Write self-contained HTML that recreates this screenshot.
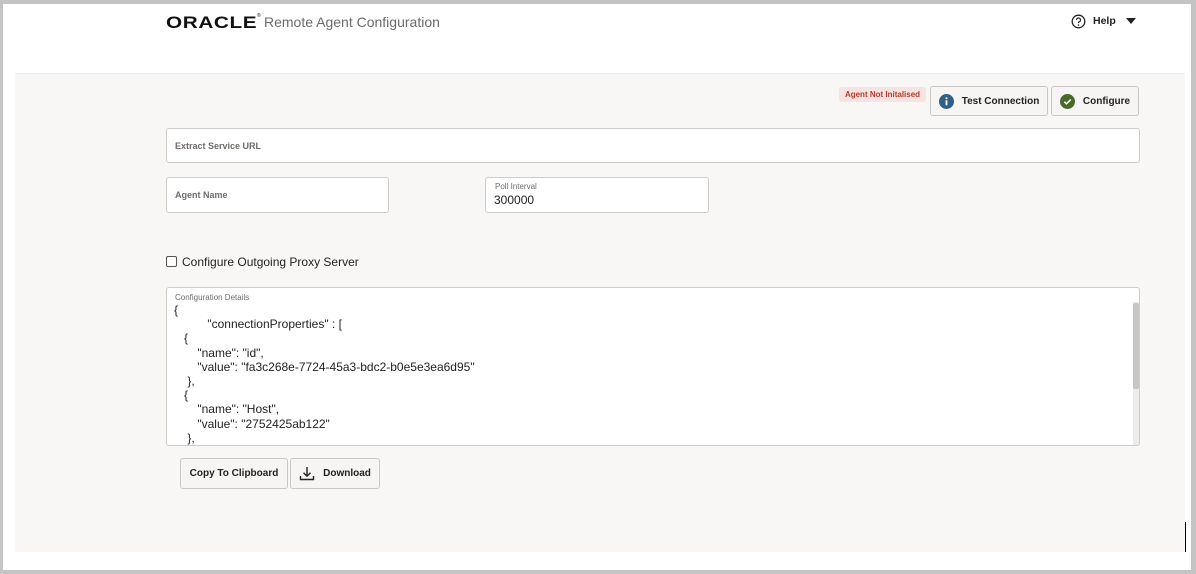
<!DOCTYPE html>
<html><head><style>
*{box-sizing:border-box;margin:0;padding:0}
body{width:1196px;height:574px;background:#c4c4c4;position:relative;font-family:"Liberation Sans",sans-serif;overflow:hidden}
.a{position:absolute}
.inner{left:3px;top:4px;width:1188px;height:566px;background:#fff}
.main{left:15px;top:73px;width:1170px;height:479px;background:#f8f7f5;border-top:1px solid #eeedeb}
.box{background:#fff;border:1px solid #cfcdca;border-radius:3px}
.lbl{font-size:9px;color:#6f6c69;font-weight:bold}
.btn{background:#f6f5f3;border:1px solid #c9c7c4;border-radius:3px;font-size:10px;font-weight:bold;color:#222;display:flex;align-items:center;justify-content:center}
.code{font-size:12px;color:#222;line-height:14.2px;white-space:pre}
</style></head><body>
<div class="a inner"></div>
<div class="a" style="left:166px;top:13px;font-size:17px;font-weight:bold;letter-spacing:0.5px;color:#111;transform:scaleX(1.22);transform-origin:left">ORACLE</div>
<div class="a" style="left:257px;top:13px;font-size:5px;color:#111">®</div>
<div class="a" style="left:264px;top:14px;font-size:14px;color:#6b6b6b">Remote Agent Configuration</div>
<svg class="a" style="left:1071px;top:14px" width="15" height="15" viewBox="0 0 15 15"><circle cx="7.5" cy="7.5" r="6.3" fill="none" stroke="#222" stroke-width="1.3"/><path d="M5.5 6a2 2 0 1 1 2.5 1.9c-.5.2-.5.6-.5 1.2" fill="none" stroke="#222" stroke-width="1.2"/><circle cx="7.5" cy="11" r=".8" fill="#222"/></svg>
<div class="a" style="left:1093px;top:15px;font-size:10.5px;font-weight:bold;color:#222">Help</div>
<svg class="a" style="left:1126px;top:18px" width="10" height="6"><path d="M0 0h10L5 6z" fill="#222"/></svg>
<div class="a main"></div>
<div class="a" style="left:839px;top:87px;width:87px;height:15px;background:#f7e3e0;border-radius:3px;color:#b23b2e;font-size:8px;font-weight:bold;text-align:center;line-height:15px">Agent Not Initalised</div>
<div class="a btn" style="left:930px;top:86px;width:118px;height:30px"><svg width="15" height="15" style="margin-right:8px"><circle cx="7.5" cy="7.5" r="7.5" fill="#2f6089"/><rect x="6.6" y="6.3" width="1.8" height="5" fill="#fff"/><circle cx="7.5" cy="4.3" r="1" fill="#fff"/></svg>Test Connection</div>
<div class="a btn" style="left:1051px;top:86px;width:88px;height:30px"><svg width="15" height="15" style="margin-right:8px"><circle cx="7.5" cy="7.5" r="7.5" fill="#4a6a2a"/><path d="M4.3 7.7l2.2 2.1 4.2-4.3" fill="none" stroke="#fff" stroke-width="1.6"/></svg>Configure</div>
<div class="a box" style="left:166px;top:128px;width:974px;height:35px"><span class="a lbl" style="left:8px;top:12px">Extract Service URL</span></div>
<div class="a box" style="left:166px;top:177px;width:223px;height:36px"><span class="a lbl" style="left:8px;top:12px">Agent Name</span></div>
<div class="a box" style="left:485px;top:177px;width:224px;height:36px"><span class="a" style="left:9px;top:4px;font-size:8px;color:#6f6c69">Poll Interval</span><span class="a" style="left:8px;top:15px;font-size:12px;color:#222">300000</span></div>
<div class="a" style="left:166px;top:256px;width:11px;height:11px;border:1px solid #555;border-radius:2px;background:#fff"></div>
<div class="a" style="left:182px;top:255px;font-size:12px;color:#222">Configure Outgoing Proxy Server</div>
<div class="a box" style="left:166px;top:287px;width:974px;height:159px;overflow:hidden">
<span class="a" style="left:8px;top:5px;font-size:8px;color:#6f6c69">Configuration Details</span>
<div class="a code" style="left:7px;top:15px">{
          "connectionProperties" : [
   {
       "name": "id",
       "value": "fa3c268e-7724-45a3-bdc2-b0e5e3ea6d95"
    },
   {
       "name": "Host",
       "value": "2752425ab122"
    },</div>
<div class="a" style="left:966px;top:14px;width:6px;height:143px;background:#ececec"></div>
<div class="a" style="left:966px;top:15px;width:6px;height:86px;background:#c6c6c6;border-radius:2px"></div>
</div>
<div class="a btn" style="left:180px;top:458px;width:108px;height:31px">Copy To Clipboard</div>
<div class="a btn" style="left:290px;top:458px;width:90px;height:31px"><svg width="16" height="15" style="margin-right:8px"><path d="M8 1v9M4.5 6.8L8 10.2l3.5-3.4M1.5 10v3.5h13V10" fill="none" stroke="#222" stroke-width="1.4"/></svg>Download</div>
<div class="a" style="left:1185px;top:522px;width:1px;height:30px;background:#000"></div>
</body></html>
